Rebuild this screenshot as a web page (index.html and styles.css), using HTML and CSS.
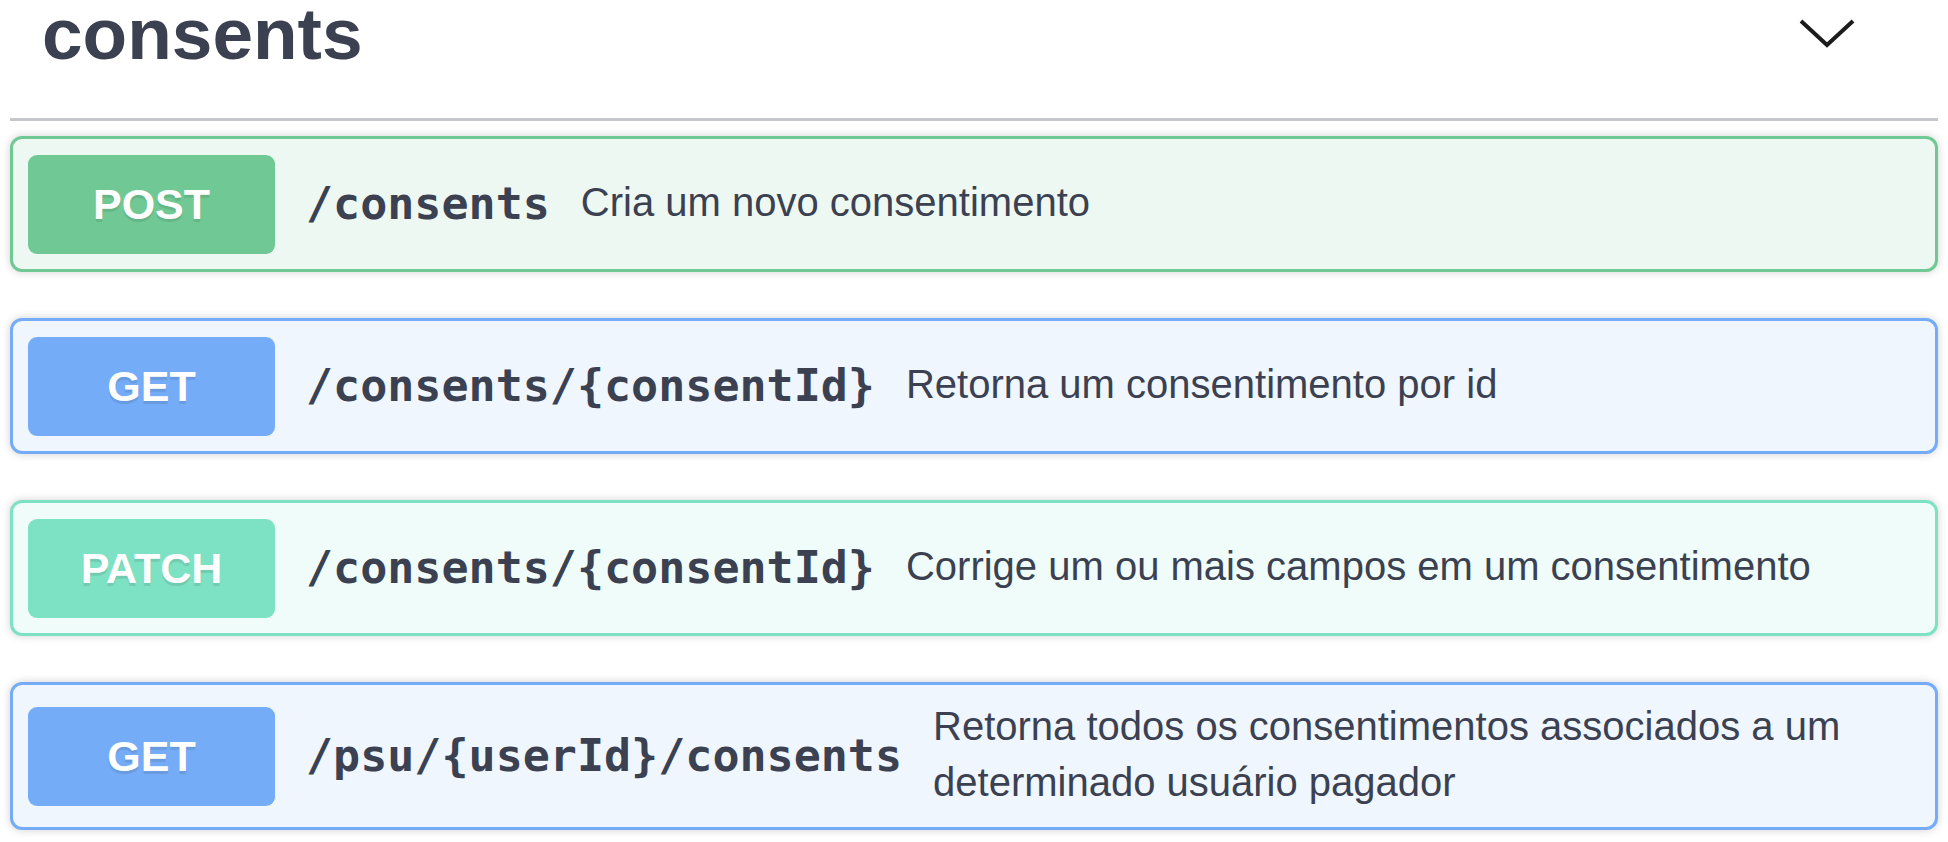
FILE: index.html
```html
<!DOCTYPE html>
<html lang="pt-BR">
<head>
<meta charset="utf-8">
<title>consents</title>
<link rel="stylesheet" href="styles.css">
</head>
<body>
<main class="tag-section">
  <header class="tag-header">
    <h3 class="tag-title">consents</h3>
    <button class="expand" type="button" aria-label="Recolher consents" aria-expanded="true">
      <svg class="chevron" viewBox="0 0 56 30" aria-hidden="true"><path d="M2 2 L28 26 L54 2"/></svg>
    </button>
  </header>
  <div class="operations">
    <button class="operation post" type="button">
      <span class="method">POST</span>
      <span class="path">/consents</span>
      <span class="description">Cria um novo consentimento</span>
    </button>
    <button class="operation get" type="button">
      <span class="method">GET</span>
      <span class="path">/consents/{consentId}</span>
      <span class="description">Retorna um consentimento por id</span>
    </button>
    <button class="operation patch" type="button">
      <span class="method">PATCH</span>
      <span class="path">/consents/{consentId}</span>
      <span class="description">Corrige um ou mais campos em um consentimento</span>
    </button>
    <button class="operation get" type="button">
      <span class="method">GET</span>
      <span class="path">/psu/{userId}/consents</span>
      <span class="description">Retorna todos os consentimentos associados a um determinado usuário pagador</span>
    </button>
  </div>
</main>
</body>
</html>
```

FILE: styles.css
```css
* {
  box-sizing: border-box;
}

body {
  margin: 0;
  background: #fff;
  color: #3b4151;
  font-family: "Liberation Sans", Arial, sans-serif;
}

.tag-section {
  padding: 0 10px 12px;
}

.tag-header {
  display: flex;
  align-items: center;
  justify-content: space-between;
  padding: 0 83px 50px 32px;
  border-bottom: 3px solid #c5c7cb;
}

.tag-title {
  margin: 0;
  font-size: 73px;
  line-height: 68px;
}

.expand {
  display: flex;
  padding: 0;
  border: 0;
  background: none;
  cursor: pointer;
}

.chevron {
  width: 56px;
  height: 30px;
  fill: none;
  stroke: #1c1c1c;
  stroke-width: 4;
}

.operations {
  display: flex;
  flex-direction: column;
  gap: 46px;
  padding-top: 15px;
}

.operation {
  display: flex;
  align-items: center;
  gap: 31px;
  width: 100%;
  min-height: 136px;
  padding: 13px 60px 13px 15px;
  border: 3px solid;
  border-radius: 12px;
  box-shadow: 0 0 9px rgba(0, 0, 0, 0.19);
  color: #3b4151;
  font-family: inherit;
  text-align: left;
  cursor: pointer;
}

.method {
  flex: none;
  width: 247px;
  border-radius: 9px;
  color: #fff;
  font-size: 43px;
  font-weight: 700;
  line-height: 99px;
  text-align: center;
  text-shadow: 0 3px 1px rgba(0, 0, 0, 0.1);
}

.path {
  flex: none;
  font-family: "DejaVu Sans Mono", monospace;
  font-size: 45px;
  font-weight: 700;
  line-height: 56px;
}

.description {
  flex: 1;
  padding-bottom: 4px;
  font-size: 40px;
  line-height: 56px;
}

.post {
  border-color: #70c995;
  background: #eef8f3;
}

.post .method {
  background: #70c995;
}

.get {
  border-color: #74acf8;
  background: #eff6fe;
}

.get .method {
  background: #74acf8;
}

.patch {
  border-color: #7de2c4;
  background: #effcf9;
}

.patch .method {
  background: #7de2c4;
}
```
